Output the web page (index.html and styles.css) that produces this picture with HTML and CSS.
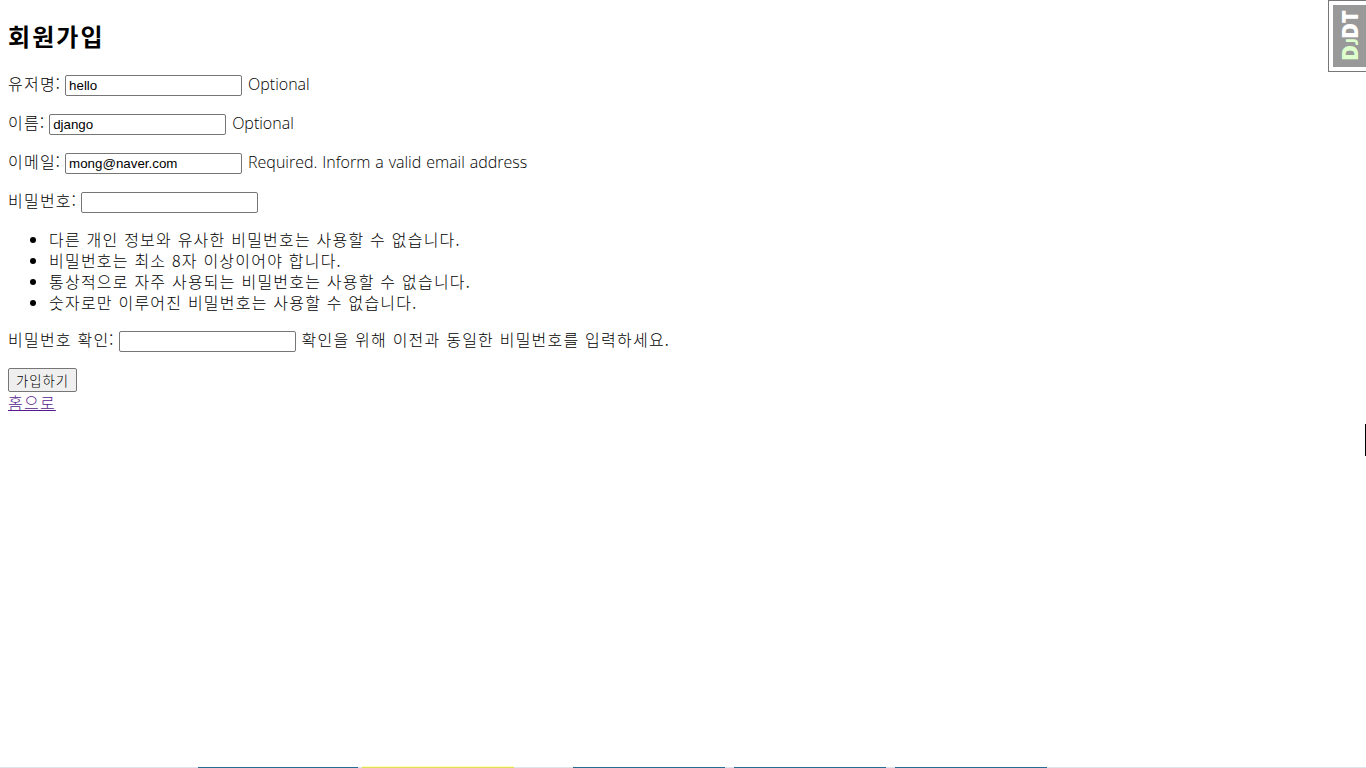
FILE: index.html
```
<!DOCTYPE html>
<html lang="ko">

<head>
    <meta charset="UTF-8">
    <meta name="viewport" content="width=device-width, initial-scale=1.0">
    <title>회원가입</title>
    <link rel="stylesheet" href="styles.css">
</head>

<body>
    <h2>회원가입</h2>
    <form method="post">
        <p>
            <label for="id_username">유저명:</label>
            <input type="text" name="username" value="hello" id="id_username">
            <span class="helptext en">Optional</span>
        </p>
        <p>
            <label for="id_first_name">이름:</label>
            <input type="text" name="first_name" value="django" id="id_first_name">
            <span class="helptext en">Optional</span>
        </p>
        <p>
            <label for="id_email">이메일:</label>
            <input type="email" name="email" value="mong@naver.com" id="id_email">
            <span class="helptext en long">Required. Inform a valid email address</span>
        </p>
        <p>
            <label for="id_password1">비밀번호:</label>
            <input type="password" name="password1" id="id_password1">
        </p>
        <ul>
            <li>다른 개인 정보와 유사한 비밀번호는 사용할 수 없습니다.</li>
            <li>비밀번호는 최소 8자 이상이어야 합니다.</li>
            <li>통상적으로 자주 사용되는 비밀번호는 사용할 수 없습니다.</li>
            <li>숫자로만 이루어진 비밀번호는 사용할 수 없습니다.</li>
        </ul>
        <p>
            <label for="id_password2">비밀번호 확인:</label>
            <input type="password" name="password2" id="id_password2">
            <span class="helptext">확인을 위해 이전과 동일한 비밀번호를 입력하세요.</span>
        </p>
        <button type="submit">가입하기</button>
    </form>
    <a class="home" href="#">홈으로</a>

    <div class="djdt">
        <div class="djdt-label"><span>D<small>J</small></span>DT</div>
    </div>
    <div class="edge"></div>
    <div class="taskbar">
        <i class="blue"></i>
        <i class="yellow"></i>
        <i class="blue"></i>
        <i class="blue"></i>
        <i class="blue"></i>
    </div>
</body>

</html>
```

FILE: styles.css
```
body {
    margin: 0 8px;
    font-family: "Noto Sans CJK KR", sans-serif;
    font-size: 16px;
    font-weight: 300;
    line-height: 21px;
    letter-spacing: 1.22px;
    color: #000;
    background: #fff;
    overflow: hidden;
}

h2 {
    margin: 19px 0 21px;
    font-size: 24px;
    font-weight: bold;
    line-height: 34px;
    letter-spacing: 2.1px;
}

p {
    display: flex;
    height: 23px;
    margin: 0 0 16px;
    line-height: 19px;
    white-space: nowrap;
}

label {
    margin-right: 4px;
}

input {
    box-sizing: border-box;
    width: 177px;
    height: 21px;
    margin: 1px 6px 0 0;
    padding: 1px 3px;
    border: 1px solid #767676;
    border-radius: 2px;
    font: 13.333px "Liberation Sans", Arial, sans-serif;
    color: #000;
    background: #fff;
}

.en {
    font-family: "Open Sans", sans-serif;
    line-height: 21px;
    letter-spacing: 0;
}

.long {
    word-spacing: 0.8px;
}

ul {
    margin: -1px 0 17px;
    padding-left: 41px;
}

button {
    display: block;
    box-sizing: border-box;
    width: 69px;
    height: 24px;
    margin-top: -1px;
    padding: 0;
    border: 1px solid #767676;
    border-radius: 2px;
    font-family: inherit;
    font-size: 13.333px;
    font-weight: 300;
    letter-spacing: 1px;
    color: #000;
    background: #efefef;
}

.home {
    color: #551a8b;
}

/* debug toolbar handle */
.djdt {
    position: fixed;
    top: 0;
    right: 0;
    box-sizing: border-box;
    width: 38px;
    height: 72px;
    padding: 4px 0 4px 4px;
    border: 1px solid #777;
    border-right: 0;
    background: #fff;
}

.djdt-label {
    box-sizing: border-box;
    width: 33px;
    height: 62px;
    writing-mode: vertical-rl;
    transform: rotate(180deg);
    font-family: "Open Sans", sans-serif;
    font-size: 22px;
    font-weight: 800;
    line-height: 33px;
    letter-spacing: -0.5px;
    text-align: center;
    color: #fff;
    background: #999;
}

.djdt-label span {
    color: #dfc;
}

.djdt-label small {
    font-family: "Lato", sans-serif;
    font-size: 16px;
    line-height: 1;
    vertical-align: -3px;
}

.edge {
    position: fixed;
    top: 424px;
    right: 0;
    width: 1px;
    height: 32px;
    background: #000;
}

.taskbar {
    position: fixed;
    left: 0;
    right: 0;
    bottom: 0;
    display: flex;
    height: 1px;
    padding-left: 198px;
    background: #dce5ec;
}

.taskbar i {
    width: 152px;
    margin-right: 9px;
}

.taskbar .blue {
    background: #286b93;
}

.taskbar .blue:first-child {
    width: 160px;
    margin-right: 4px;
}

.taskbar .yellow {
    margin-right: 59px;
    background: #e0df5c;
    box-shadow: 0 -1px 0 #ffffc0;
}
```
